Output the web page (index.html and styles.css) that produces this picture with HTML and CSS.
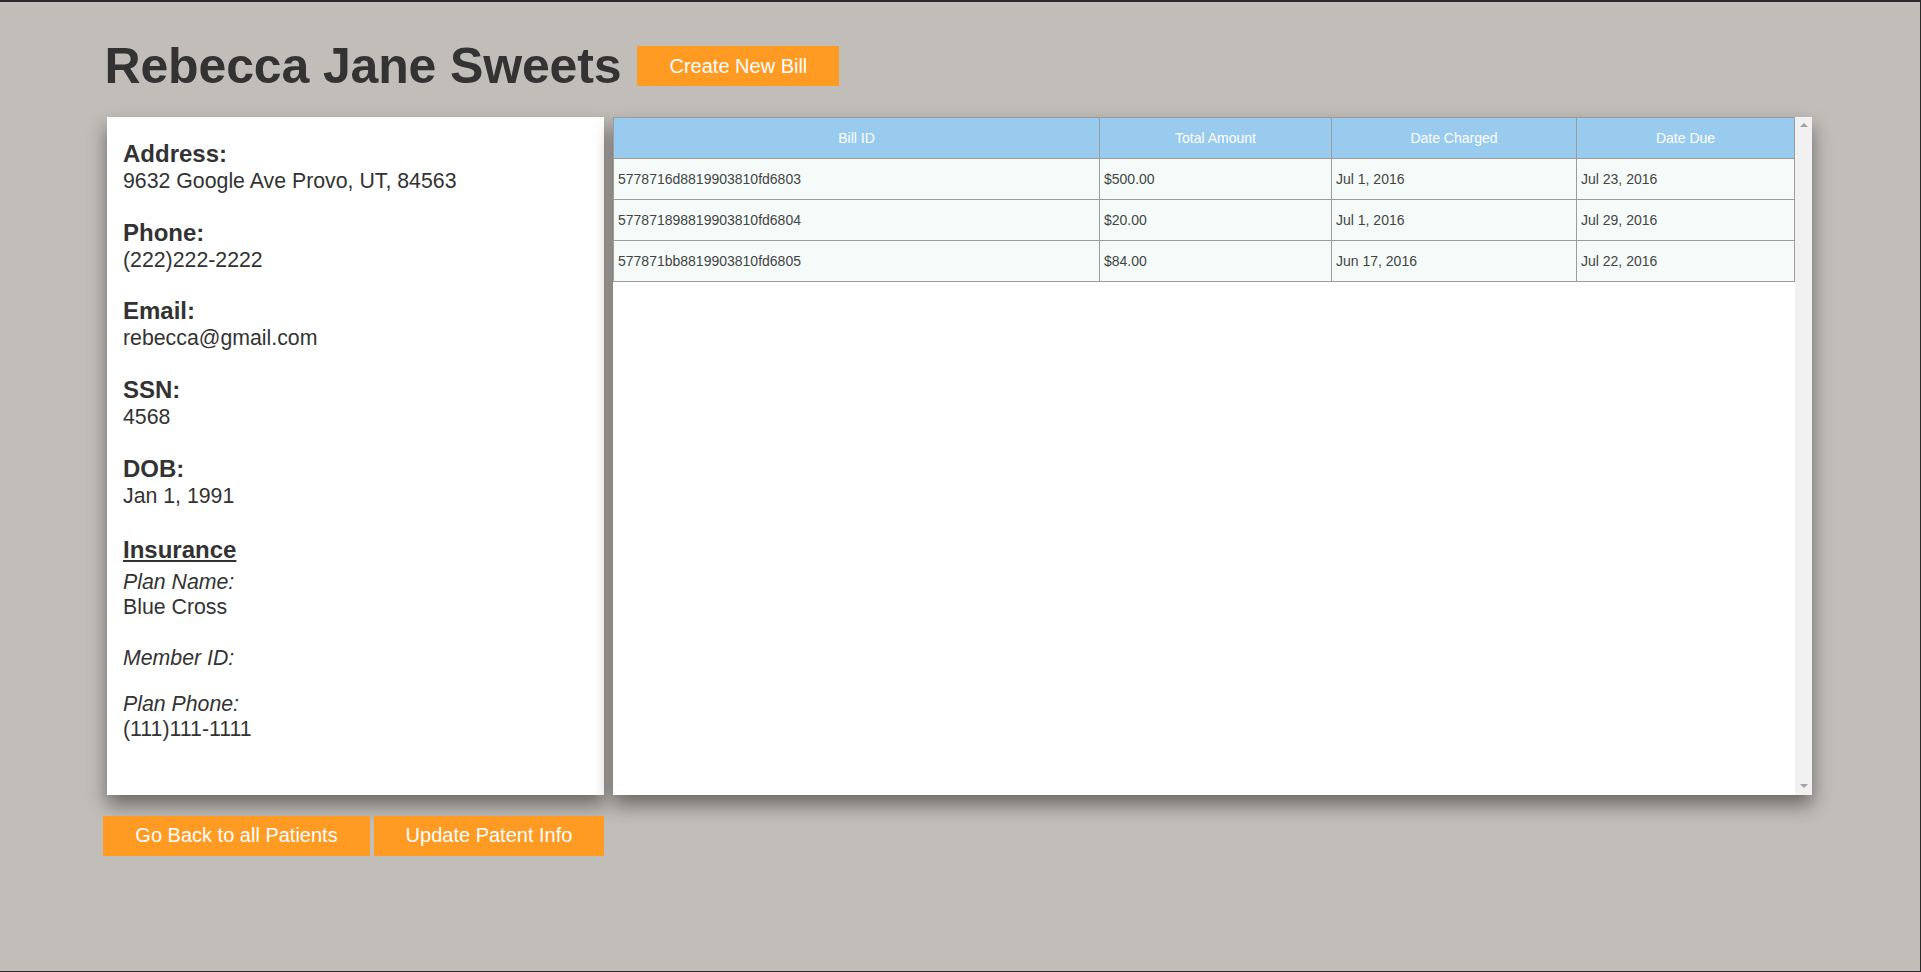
FILE: index.html
```html
<!DOCTYPE html>
<html lang="en">
<head>
<meta charset="utf-8">
<title>Rebecca Jane Sweets</title>
<link rel="stylesheet" href="styles.css">
</head>
<body>
<div class="frame">
  <div class="page">
    <header class="head">
      <h1 class="title">Rebecca Jane Sweets</h1>
      <button class="btn btn-create">Create New Bill</button>
    </header>

    <div class="main">
      <section class="card">
        <div class="field">
          <div class="label">Address:</div>
          <div class="value">9632 Google Ave Provo, UT, 84563</div>
        </div>
        <div class="field">
          <div class="label">Phone:</div>
          <div class="value">(222)222-2222</div>
        </div>
        <div class="field">
          <div class="label">Email:</div>
          <div class="value">rebecca@gmail.com</div>
        </div>
        <div class="field">
          <div class="label">SSN:</div>
          <div class="value">4568</div>
        </div>
        <div class="field">
          <div class="label">DOB:</div>
          <div class="value">Jan 1, 1991</div>
        </div>
        <div class="insurance">
          <div class="ins-title">Insurance</div>
          <div class="ins-field first">
            <div class="ins-label">Plan Name:</div>
            <div class="ins-value">Blue Cross</div>
          </div>
          <div class="ins-field">
            <div class="ins-label">Member ID:</div>
            <div class="ins-value"></div>
          </div>
          <div class="ins-field after-empty">
            <div class="ins-label">Plan Phone:</div>
            <div class="ins-value">(111)111-1111</div>
          </div>
        </div>
      </section>

      <section class="panel">
        <div class="table-wrap">
          <table class="bills">
            <colgroup>
              <col class="c1"><col class="c2"><col class="c3"><col class="c4">
            </colgroup>
            <thead>
              <tr><th>Bill ID</th><th>Total Amount</th><th>Date Charged</th><th>Date Due</th></tr>
            </thead>
            <tbody>
              <tr><td>5778716d8819903810fd6803</td><td>$500.00</td><td>Jul 1, 2016</td><td>Jul 23, 2016</td></tr>
              <tr><td>577871898819903810fd6804</td><td>$20.00</td><td>Jul 1, 2016</td><td>Jul 29, 2016</td></tr>
              <tr><td>577871bb8819903810fd6805</td><td>$84.00</td><td>Jun 17, 2016</td><td>Jul 22, 2016</td></tr>
            </tbody>
          </table>
        </div>
        <div class="scrollbar">
          <span class="arrow up"></span>
          <span class="arrow down"></span>
        </div>
      </section>
    </div>

    <div class="actions">
      <button class="btn btn-back">Go Back to all Patients</button>
      <button class="btn btn-update">Update Patent Info</button>
    </div>
  </div>
</div>
</body>
</html>
```

FILE: styles.css
```css
html, body {
  margin: 0;
  padding: 0;
  background: #c1bdb9;
}

body {
  font-family: "Liberation Sans", Arial, sans-serif;
  color: #333;
}

.frame {
  box-sizing: border-box;
  height: 972px;
  border-top: 2px solid #2a2a2a;
  border-right: 1px solid #2a2a2a;
  border-bottom: 1px solid #2a2a2a;
  overflow: hidden;
}

.page {
  padding-left: 103px;
  padding-top: 35.5px;
}

.head {
  display: flex;
  align-items: center;
  gap: 16px;
}

.title {
  margin: 0 0 0 1.5px;
  font-size: 50px;
  line-height: 57.5px;
  font-weight: bold;
  color: #333;
  letter-spacing: -0.15px;
}

.btn {
  font-family: "Liberation Sans", Arial, sans-serif;
  font-size: 20px;
  color: #fff;
  background: #ff9a22;
  border: none;
  border-radius: 1px;
  height: 40px;
  padding: 0;
  margin: 0;
  cursor: pointer;
}

.btn-create {
  width: 202px;
}

.main {
  display: flex;
  margin-top: 22px;
  margin-left: 4px;
  gap: 9px;
  height: 678px;
}

.card {
  box-sizing: border-box;
  width: 497px;
  height: 678px;
  background: #fff;
  padding: 24px 16px;
  box-shadow: 0 10px 18px rgba(0, 0, 0, 0.45);
}

.field {
  margin-bottom: 24.7px;
}

.label {
  font-size: 24px;
  line-height: 26px;
  font-weight: bold;
}

.value {
  font-size: 21.3px;
  line-height: 27px;
  margin-top: 1px;
}

.insurance {
  margin-top: 27.2px;
}

.ins-title {
  font-size: 24px;
  line-height: 26px;
  font-weight: bold;
  text-decoration: underline;
}

.ins-field {
  margin-top: 25.7px;
}

.ins-field.first {
  margin-top: 7.1px;
}

.ins-field.after-empty {
  margin-top: 21.6px;
}

.ins-label {
  font-size: 21.3px;
  line-height: 25px;
  font-style: italic;
}

.ins-value {
  font-size: 21.3px;
  line-height: 25px;
}

.panel {
  width: 1199px;
  height: 678px;
  background: #fff;
  display: flex;
  box-shadow: 0 10px 18px rgba(0, 0, 0, 0.45);
}

.table-wrap {
  flex: 1;
}

.bills {
  border-collapse: collapse;
  width: 1181px;
  table-layout: fixed;
  font-size: 14px;
}

.c1 { width: 486px; }
.c2 { width: 232px; }
.c3 { width: 245px; }
.c4 { width: 218px; }

.bills th,
.bills td {
  border: 1px solid #9c9c9c;
  height: 41px;
  box-sizing: border-box;
  padding: 0 4px;
}

.bills th {
  background: #99cbee;
  color: #fff;
  font-weight: normal;
  text-align: center;
}

.bills td {
  background: #f5fbf9;
  color: #444;
  text-align: left;
}

.scrollbar {
  width: 18px;
  background: #f1f1f1;
  position: relative;
}

.arrow {
  position: absolute;
  left: 5px;
  width: 0;
  height: 0;
  border-left: 4px solid transparent;
  border-right: 4px solid transparent;
}

.arrow.up {
  top: 6px;
  border-bottom: 4px solid #a3a3a3;
}

.arrow.down {
  bottom: 7px;
  border-top: 4px solid #a3a3a3;
}

.actions {
  display: flex;
  gap: 4px;
  margin-top: 20.5px;
}

.btn-back {
  width: 267px;
}

.btn-update {
  width: 230px;
}
```
